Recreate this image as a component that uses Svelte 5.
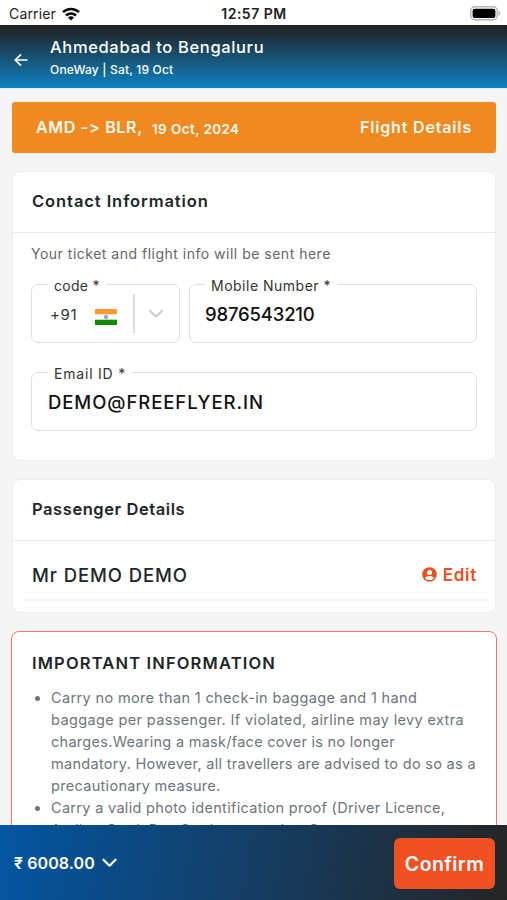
<script>
  let trip = { from: 'Ahmedabad', to: 'Bengaluru', type: 'OneWay', day: 'Sat, 19 Oct' };
  let mobile = '9876543210';
  let email = 'DEMO@FREEFLYER.IN';
  let total = '6008.00';

  let passengers = ['Mr DEMO DEMO'];

  let notes = [
    [
      { text: 'Carry no more than 1 check-in baggage and 1 hand', ls: 0.36 },
      { text: 'baggage per passenger. If violated, airline may levy extra', ls: 0.37 },
      { text: 'charges.Wearing a mask/face cover is no longer', ls: 0.28 },
      { text: 'mandatory. However, all travellers are advised to do so as a', ls: 0.3 },
      { text: 'precautionary measure.', ls: 0.31 }
    ],
    [
      { text: 'Carry a valid photo identification proof (Driver Licence,', ls: 0.31 },
      { text: 'Aadhar Card, Pan Card or any other Government', ls: 0.25 }
    ]
  ];
</script>

<div class="screen">
  <div class="status">
    <div class="carrier">
      <span>Carrier</span>
      <svg width="18" height="14" viewBox="0 0 18 14" fill="none" stroke="#000" stroke-width="2.5">
        <path d="M1 5.1a11.6 11.6 0 0 1 16 0" />
        <path d="M4 8.5a7.3 7.3 0 0 1 10 0" />
        <path d="M9 13.6 6 10.6a4.4 4.4 0 0 1 6 0z" fill="#000" stroke="none" />
      </svg>
    </div>
    <span class="clock">12:57 PM</span>
    <svg class="battery" width="31" height="15" viewBox="0 0 31 15">
      <rect x="0.8" y="0.8" width="26.4" height="13" rx="4" fill="#fff" stroke="#b5b5b5" stroke-width="1.4" />
      <rect x="2.6" y="2.7" width="22.8" height="9.2" rx="2" fill="#000" />
      <path d="M28.6 5c2.2.7 2.2 4 0 4.7z" fill="#b5b5b5" />
    </svg>
  </div>

  <header>
    <svg width="14" height="14" viewBox="0 0 14 14" fill="none" stroke="#fff" stroke-width="1.7">
      <path d="M13.5 7H1.5M7 1.3 1.3 7 7 12.7" />
    </svg>
    <div>
      <h1>{trip.from} to {trip.to}</h1>
      <p>{trip.type} | {trip.day}</p>
    </div>
  </header>

  <main>
    <div class="flight">
      <span class="route">AMD -&gt; BLR,</span>
      <span class="date">19 Oct, 2024</span>
      <span class="details">Flight Details</span>
    </div>

    <section class="card contact">
      <h2 class="c-title">Contact Information</h2>
      <div class="card-body">
        <p class="hint">Your ticket and flight info will be sent here</p>
        <div class="fields">
          <div class="field code">
            <span class="label l-code">code *</span>
            <span class="dial">+91</span>
            <svg class="flag" width="22" height="16" viewBox="0 0 22 16">
              <rect width="22" height="16" fill="#fff" />
              <rect width="22" height="5.3" fill="#ff9933" />
              <rect y="10.7" width="22" height="5.3" fill="#128807" />
              <circle cx="11" cy="8" r="1.8" fill="#a9a6dd" stroke="#7773c4" stroke-width="0.6" />
            </svg>
            <span class="sep"></span>
            <svg width="16" height="10" viewBox="0 0 16 10" fill="none" stroke="#ccc" stroke-width="2.2" stroke-linecap="round" stroke-linejoin="round">
              <path d="M2 2l6 5.500L14 2" />
            </svg>
          </div>
          <div class="field mobile">
            <span class="label l-mobile">Mobile Number *</span>
            <span class="value v-mobile">{mobile}</span>
          </div>
        </div>
        <div class="field email">
          <span class="label l-email">Email ID *</span>
          <span class="value v-email">{email}</span>
        </div>
      </div>
    </section>

    <section class="card passengers">
      <h2 class="p-title">Passenger Details</h2>
      {#each passengers as name}
        <div class="passenger">
          <span class="name">{name}</span>
          <button class="edit">
            <svg width="15" height="15" viewBox="0 0 15 15">
              <circle cx="7.5" cy="7.5" r="7.3" fill="#e8501d" />
              <circle cx="7.5" cy="5.4" r="2.5" fill="#fff" />
              <path d="M2.9 11.2c1.7-3 7.5-3 9.2 0-2.3 2.5-6.9 2.5-9.2 0z" fill="#fff" />
            </svg>
            <span>Edit</span>
          </button>
        </div>
      {/each}
    </section>

    <section class="card important">
      <h2>IMPORTANT INFORMATION</h2>
      <ul>
        {#each notes as lines}
          <li>
            {#each lines as line}
              <div style="letter-spacing: {line.ls}px">{line.text}</div>
            {/each}
          </li>
        {/each}
      </ul>
    </section>
  </main>

  <footer>
    <div class="price">
      <span>₹ {total}</span>
      <svg width="15" height="10" viewBox="0 0 15 10" fill="none" stroke="#fff" stroke-width="2.2" stroke-linecap="round" stroke-linejoin="round">
        <path d="M1.5 1.7l6 6 6-6" />
      </svg>
    </div>
    <button class="confirm">Confirm</button>
  </footer>
</div>

<style>
  :global(body) {
    margin: 0;
    background: #f5f5f5;
  }
  .screen {
    width: 507px;
    height: 900px;
    display: flex;
    flex-direction: column;
    overflow: hidden;
    background: #f5f5f5;
    color: #212529;
    font-family: Inter, 'Noto Sans', sans-serif;
    white-space: nowrap;
  }
  h1, h2, p, ul {
    margin: 0;
    padding: 0;
  }
  button {
    border: 0;
    padding: 0;
    background: none;
    font-family: inherit;
  }
  svg {
    display: block;
    flex: none;
  }

  .status {
    flex: none;
    height: 25px;
    box-sizing: border-box;
    padding: 2px 6px 0 9px;
    display: grid;
    grid-template-columns: 1fr auto 1fr;
    align-items: center;
    background: #fff;
    color: #222;
    font-size: 14px;
  }
  .carrier {
    display: flex;
    gap: 6px;
    align-items: center;
    letter-spacing: 0.15px;
  }
  .clock {
    margin-right: 2px;
    font-weight: 600;
    letter-spacing: 0.5px;
  }
  .battery {
    justify-self: end;
  }

  header {
    flex: none;
    height: 63px;
    display: flex;
    align-items: center;
    gap: 22px;
    padding-left: 14px;
    background: linear-gradient(#20201f, #0f82c2);
    border-bottom: 1px solid #d5f3fa;
    color: #fff;
  }
  header svg {
    margin-top: 6px;
  }
  h1 {
    margin-top: 2px;
    font-size: 16.5px;
    line-height: 22px;
    font-weight: 500;
    letter-spacing: 0.64px;
  }
  header p {
    margin-top: 3px;
    font-size: 12px;
    line-height: 18px;
    font-weight: 500;
    letter-spacing: 0.18px;
  }

  main {
    flex: 1;
    min-height: 0;
    overflow: hidden;
    padding: 13px 11px 0 12px;
  }
  .flight {
    display: flex;
    align-items: center;
    height: 51px;
    box-sizing: border-box;
    padding: 0 24px;
    border-radius: 3px;
    background: #f08a20;
    color: #fffaf0;
    font-weight: 600;
  }
  .route {
    width: 106px;
    margin-top: -2px;
    font-size: 16px;
    letter-spacing: 0.7px;
    font-feature-settings: 'calt' 0;
  }
  .date {
    margin: 2px 0 0 10px;
    font-size: 13.5px;
    letter-spacing: 0.4px;
  }
  .details {
    margin: -2px 0 0 auto;
    font-size: 16px;
    letter-spacing: 0.83px;
  }

  .card {
    box-sizing: border-box;
    margin-top: 18px;
    border: 1px solid #ededed;
    border-radius: 8px;
    background: #fff;
  }
  .card h2 {
    height: 60px;
    line-height: 59px;
    padding-left: 19px;
    border-bottom: 1px solid #e9e9e9;
    font-size: 16.5px;
    font-weight: 600;
  }
  .card .c-title {
    letter-spacing: 0.92px;
  }
  .card .p-title {
    letter-spacing: 0.57px;
  }
  .contact {
    height: 290px;
  }
  .card-body {
    padding: 10px 18px 0;
  }
  .hint {
    font-size: 14px;
    line-height: 22px;
    letter-spacing: 0.5px;
    color: #666;
  }
  .fields {
    display: flex;
    gap: 9px;
    margin-top: 19px;
  }
  .field {
    position: relative;
    display: flex;
    align-items: center;
    box-sizing: border-box;
    height: 59px;
    border: 1px solid #dedede;
    border-radius: 7px;
  }
  .code {
    width: 149px;
    padding-left: 18px;
  }
  .mobile {
    flex: 1;
    padding-left: 15px;
  }
  .email {
    margin-top: 29px;
    padding-left: 16px;
  }
  /* floating labels sit on the field's top border */
  .label {
    position: absolute;
    top: -9px;
    left: 16px;
    padding: 0 6px;
    background: #fff;
    font-size: 14px;
    line-height: 20px;
    color: #333;
  }
  .l-code {
    letter-spacing: 0.3px;
  }
  .l-mobile {
    left: 15px;
    letter-spacing: 0.5px;
  }
  .l-email {
    letter-spacing: 0.8px;
  }
  .dial {
    width: 45px;
    margin-top: 2px;
    font-size: 15px;
    letter-spacing: 0.6px;
    color: #333;
  }
  .flag {
    margin-top: 6px;
  }
  .sep {
    width: 2px;
    height: 39px;
    margin: 0 13px 0 16px;
    background: #dcdcdc;
  }
  .value {
    font-size: 18.5px;
    font-weight: 500;
    color: #111;
  }
  .v-mobile {
    letter-spacing: -0.18px;
  }
  .v-email {
    letter-spacing: 0.93px;
  }

  .passengers {
    height: 134px;
  }
  .passenger {
    display: flex;
    justify-content: space-between;
    align-items: center;
    height: 60px;
    margin: 0 9px;
    padding: 10px 9px 0 10px;
    box-sizing: border-box;
    border-bottom: 2px solid #f3f3f3;
  }
  .name {
    font-size: 18.5px;
    font-weight: 500;
    letter-spacing: 0.9px;
  }
  .edit {
    display: flex;
    align-items: center;
    gap: 6px;
    margin-top: -1px;
    color: #e8501d;
    font-size: 17px;
    font-weight: 600;
    letter-spacing: 0.75px;
  }

  .important {
    height: 400px;
    margin-left: -1px;
    margin-right: -1px;
    border-color: #f27670;
  }
  .passengers + .important {
    margin-top: 18px;
  }
  .important h2 {
    height: 55px;
    line-height: 63px;
    padding-left: 20px;
    border: 0;
    letter-spacing: 1.16px;
  }
  ul {
    padding-left: 39px;
    font-size: 14.5px;
    line-height: 22px;
    color: #6c757d;
  }

  footer {
    flex: none;
    height: 75px;
    box-sizing: border-box;
    display: flex;
    justify-content: space-between;
    align-items: center;
    padding: 2px 12px 0 14px;
    background: linear-gradient(100deg, #0356a3, #252525);
    color: #fff;
  }
  .price {
    display: flex;
    align-items: center;
    gap: 7px;
    margin-top: -2px;
    font-size: 16px;
    font-weight: 600;
    letter-spacing: 0.1px;
  }
  .confirm {
    width: 101px;
    height: 51px;
    border-radius: 6px;
    background: #f05022;
    color: #fff;
    font-size: 19.5px;
    font-weight: 600;
    letter-spacing: 0.4px;
  }
</style>
